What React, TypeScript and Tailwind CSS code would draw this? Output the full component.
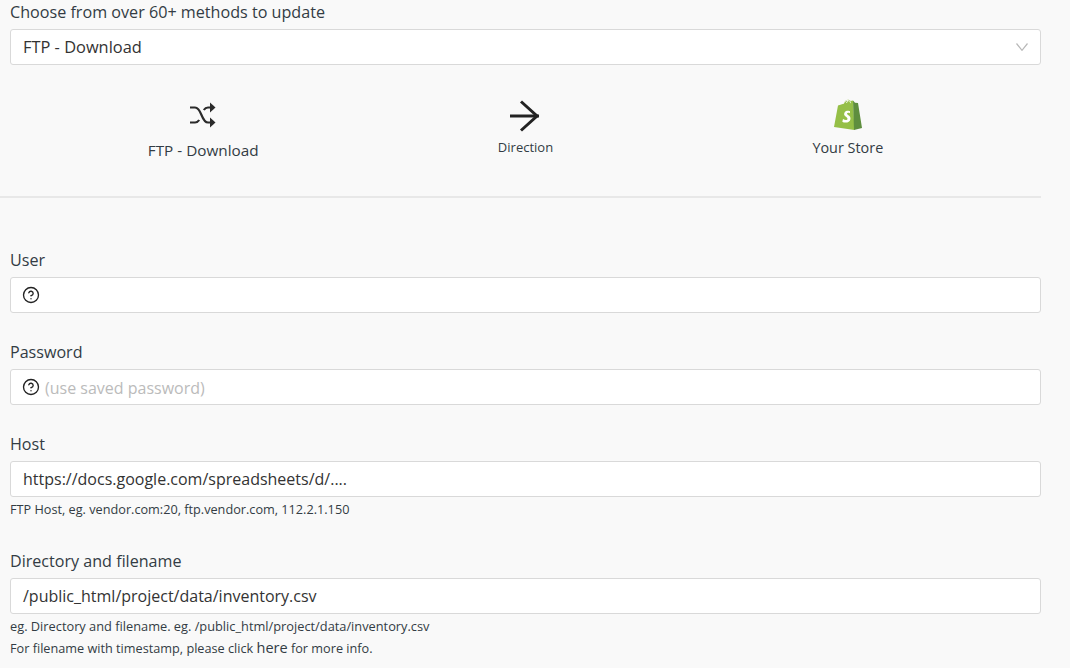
import React from 'react';
import { CircleHelp } from 'lucide-react';

function ShuffleIcon() {
  return (
    <svg width="28" height="28" viewBox="0 0 28 28" fill="none" stroke="#2b2b2b" strokeWidth="2.2">
      <path d="M1 6.500h5c3 0 4.500 2.500 6.500 7.500s3.500 7.500 6.500 7.500h4" />
      <path d="M1 21.500h5c2 0 3.200-1 4.200-2.500M14.800 9c1-1.500 2.200-2.500 4.200-2.500h4" />
      <path d="M21 1.500l5.500 5-5.500 5z" fill="#2b2b2b" stroke="none" />
      <path d="M21 16.500l5.500 5-5.500 5z" fill="#2b2b2b" stroke="none" />
    </svg>
  );
}

function ArrowIcon() {
  return (
    <svg width="32" height="32" viewBox="0 0 32 32" fill="none" stroke="#222" strokeWidth="3" className="ml-[2px] mt-[2px]">
      <path d="M0 16h29" />
      <path d="M11 1.500l16 14.500-16 14.500" />
    </svg>
  );
}

function ShopifyIcon() {
  return (
    <svg width="30" height="32" viewBox="0 0 30 32">
      <path d="M1 28L5 6.500l5.500-1.800C11.500 2 13.500.6 15.500.8c1 .1 1.600.6 2 1.200l2.500-.5 1.500 29.500z" fill="#95bf47" />
      <path d="M20 1.500l2 2.300 3 .3 4 25-8 1.900z" fill="#5e8e3e" />
      <path d="M10.500 4.700c.8-2.300 2.500-3.600 4.500-3.200M13.500 4c.4-1.500 1.200-2.300 2.300-2.300 1.300.2 1.700 1.400 1.700 2.400" fill="none" stroke="#f9f9f9" strokeWidth=".9" />
      <path d="M17 12.300c-.8-.5-4.800-1.400-5.800 2.200-.7 3 3.500 3.400 3.300 5.400-.2 1.500-2.500 1.300-4.500.1l-.7 2.700c2.300 1.500 7.600 1.500 8.200-2.800.4-3.300-3.700-3.800-3.500-5.300.2-.9 1.500-1 3-.3z" fill="#fff" />
    </svg>
  );
}

function SelectChevron() {
  return (
    <svg width="12" height="8" viewBox="0 0 12 8" fill="none" stroke="#b8b8b8" strokeWidth="1.200">
      <path d="M.5.500L6 7.300 11.500.500" />
    </svg>
  );
}

function Field({ label, value, placeholder, help, children, className }: {
  label: string;
  value?: string;
  placeholder?: string;
  help?: boolean;
  children?: React.ReactNode;
  className?: string;
}) {
  return (
    <div className={className}>
      <div className="text-[16.100px] leading-[24px] text-[#333c44]">{label}</div>
      <div className="mt-[5px] flex h-[36px] items-center rounded-[3px] border border-[#d9d9d9] bg-white px-[12px] text-[16px] text-[#333]">
        {help && <CircleHelp size={18} strokeWidth={1.8} className="-ml-[1px] mr-[5px] text-[#222]" />}
        {value}
        {placeholder && <span className="mt-[2px] text-[#bbbbbb]">{placeholder}</span>}
      </div>
      {children}
    </div>
  );
}

export default function App() {
  return (
    <div className="h-[668px] w-[1070px] overflow-hidden bg-[#f9f9f9] font-['Open_Sans',sans-serif]">
      <div className="ml-[10px] w-[1031px]">
        <div className="text-[16.150px] leading-[24px] text-[#333c44]">Choose from over 60+ methods to update</div>
        <div className="mt-[5px] flex h-[36px] items-center justify-between rounded-[3px] border border-[#d9d9d9] bg-white px-[12px] text-[16.400px] text-[#333]">
          FTP - Download
          <SelectChevron />
        </div>

        <div className="mx-[32px] mt-[30px] grid h-[68px] grid-cols-3 text-center text-[#333c44]">
          <div className="flex flex-col items-center">
            <div className="flex h-[40px] items-center"><ShuffleIcon /></div>
            <div className="mt-[3px] text-[15.300px] leading-[24px]">FTP - Download</div>
          </div>
          <div className="flex flex-col items-center">
            <div className="flex h-[40px] items-center"><ArrowIcon /></div>
            <div className="text-[13px] leading-[24px]">Direction</div>
          </div>
          <div className="flex flex-col items-center">
            <div className="flex h-[40px] items-center"><ShopifyIcon /></div>
            <div className="mt-[1px] text-[14.400px] leading-[24px]">Your Store</div>
          </div>
        </div>
      </div>

      <div className="mt-[33px] h-[2px] w-[1041px] bg-[#e8e8e8]" />

      <div className="ml-[10px] w-[1031px]">
        <Field className="mt-[50px]" label="User" help />
        <Field className="mt-[27px]" label="Password" help placeholder="(use saved password)" />
        <Field className="mt-[27px]" label="Host" value="https://docs.google.com/spreadsheets/d/....">
          <div className="mt-[2px] text-[12.700px] leading-[20px] text-[#333c44]">FTP Host, eg. vendor.com:20, ftp.vendor.com, 112.2.1.150</div>
        </Field>
        <Field className="mt-[30px]" label="Directory and filename" value="/public_html/project/data/inventory.csv">
          <div className="mt-[1px] text-[12.800px] leading-[22px] text-[#333c44]">eg. Directory and filename. eg. /public_html/project/data/inventory.csv</div>
          <div className="text-[12.700px] leading-[22px] text-[#333c44]">For filename with timestamp, please click <span className="text-[14.500px] leading-none">here</span> for more info.</div>
        </Field>
      </div>
    </div>
  );
}
